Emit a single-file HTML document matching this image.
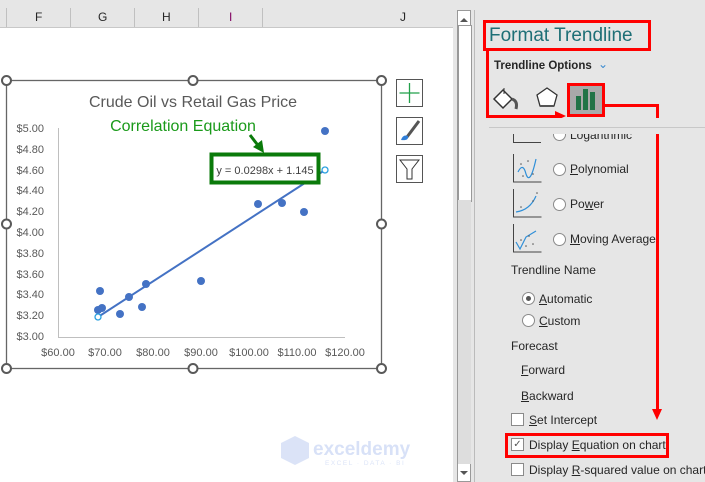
<!DOCTYPE html>
<html><head><style>
body{margin:0;width:705px;height:482px;background:#e6e6e6;position:relative;overflow:hidden;font-family:"Liberation Sans",sans-serif;}
.a{position:absolute;}
.t{position:absolute;font-size:12px;color:#262626;white-space:nowrap;}
u{text-decoration:underline;}
.rad{position:absolute;width:11px;height:11px;border:1px solid #8a8a8a;border-radius:50%;background:#fff;}
.chk{position:absolute;width:11px;height:11px;border:1px solid #8a8a8a;background:#fff;}
.red{position:absolute;border:3px solid #f00;}
.ic{position:absolute;width:27px;height:27px;border-left:1px solid #444;border-bottom:1px solid #444;}
</style></head><body>
<div class="a" style="left:0;top:0;width:453px;height:27px;background:#e6e6e6;border-bottom:1px solid #c8c8c8"></div>
<div class="a" style="left:6px;top:8px;width:1px;height:19px;background:#c0c0c0"></div>
<div class="a" style="left:70px;top:8px;width:1px;height:19px;background:#c0c0c0"></div>
<div class="a" style="left:134px;top:8px;width:1px;height:19px;background:#c0c0c0"></div>
<div class="a" style="left:198px;top:8px;width:1px;height:19px;background:#c0c0c0"></div>
<div class="a" style="left:262px;top:8px;width:1px;height:19px;background:#c0c0c0"></div>
<div class="t" style="left:35px;top:10px">F</div>
<div class="t" style="left:98px;top:10px">G</div>
<div class="t" style="left:162px;top:10px">H</div>
<div class="t" style="left:229px;top:10px;color:#800060">I</div>
<div class="t" style="left:400px;top:10px">J</div>
<div class="a" style="left:0;top:28px;width:453px;height:454px;background:#fff"></div>
<div class="a" style="left:457px;top:10px;width:14px;height:472px;background:#fff;border:1px solid #999;box-sizing:border-box"></div>
<div class="a" style="left:458px;top:25px;width:12px;height:175px;border:1px solid #999;background:#fff"></div>
<div class="a" style="left:458px;top:200px;width:13px;height:264px;background:#ddd"></div>
<div class="a" style="left:460px;top:14px;width:0;height:0;border:4px solid transparent;border-bottom:4px solid #555"></div>
<div class="a" style="left:460px;top:471px;width:0;height:0;border:4px solid transparent;border-top:4px solid #555"></div>
<div class="a" style="left:474px;top:10px;width:1px;height:472px;background:#bbb"></div>
<svg class="a" style="left:0;top:0" width="455" height="482">
<rect x="6.5" y="80.5" width="375" height="288" fill="#fff" stroke="#666" stroke-width="1.3"/>
<g fill="#fff" stroke="#595959" stroke-width="2">
<circle cx="6.5" cy="80.5" r="4.5"/><circle cx="193" cy="80.5" r="4.5"/><circle cx="381.5" cy="80.5" r="4.5"/>
<circle cx="6.5" cy="224" r="4.5"/><circle cx="381.5" cy="224" r="4.5"/>
<circle cx="6.5" cy="368.5" r="4.5"/><circle cx="193" cy="368.5" r="4.5"/><circle cx="381.5" cy="368.5" r="4.5"/>
</g>
<line x1="58.5" y1="128" x2="58.5" y2="337" stroke="#bfbfbf"/>
<line x1="58" y1="337.5" x2="345" y2="337.5" stroke="#bfbfbf"/>
<g font-family="Liberation Sans" font-size="11" fill="#595959" text-anchor="end">
<text x="44" y="132">$5.00</text><text x="44" y="153">$4.80</text><text x="44" y="174">$4.60</text><text x="44" y="194">$4.40</text><text x="44" y="215">$4.20</text><text x="44" y="236">$4.00</text><text x="44" y="257">$3.80</text><text x="44" y="278">$3.60</text><text x="44" y="298">$3.40</text><text x="44" y="319">$3.20</text><text x="44" y="340">$3.00</text>
</g>
<g font-family="Liberation Sans" font-size="11" fill="#595959" text-anchor="middle">
<text x="58" y="356">$60.00</text><text x="105" y="356">$70.00</text><text x="153" y="356">$80.00</text><text x="201" y="356">$90.00</text><text x="249" y="356">$100.00</text><text x="297" y="356">$110.00</text><text x="345" y="356">$120.00</text>
</g>
<text x="193" y="107" text-anchor="middle" font-family="Liberation Sans" font-size="16" fill="#595959">Crude Oil vs Retail Gas Price</text>
<text x="183" y="131" text-anchor="middle" font-family="Liberation Sans" font-size="16" fill="#1a9a1a">Correlation Equation</text>
<line x1="98" y1="317" x2="325" y2="170" stroke="#4472c4" stroke-width="2"/>
<g fill="#4472c4">
<circle cx="325" cy="131" r="4"/><circle cx="258" cy="204" r="4"/><circle cx="282" cy="203" r="4"/><circle cx="304" cy="212" r="4"/>
<circle cx="100" cy="291" r="4"/><circle cx="98" cy="310" r="4"/><circle cx="102" cy="308" r="4"/><circle cx="120" cy="314" r="4"/>
<circle cx="129" cy="297" r="4"/><circle cx="142" cy="307" r="4"/><circle cx="146" cy="284" r="4"/><circle cx="201" cy="281" r="4"/>
</g>
<circle cx="98" cy="317" r="3" fill="#fff" stroke="#2aa0e0" stroke-width="1.3"/>
<circle cx="325" cy="170" r="3" fill="#fff" stroke="#2aa0e0" stroke-width="1.3"/>
<rect x="211.5" y="154.5" width="107" height="28" fill="#fff" stroke="#0a7a0a" stroke-width="4"/>
<text x="265" y="174" text-anchor="middle" font-family="Liberation Sans" font-size="11" fill="#404040">y = 0.0298x + 1.145</text>
<line x1="250" y1="135" x2="260" y2="148" stroke="#0a7a0a" stroke-width="3"/>
<polygon points="264,153 253,147 262,140" fill="#0a7a0a"/>
<rect x="396.5" y="79.5" width="26" height="27" fill="#fff" stroke="#555"/>
<path d="M409.5 83v20M399.5 93h20" stroke="#22a04a" stroke-width="1.3"/>
<rect x="396.5" y="117.5" width="26" height="27" fill="#fff" stroke="#555"/>
<path d="M419 121 L407 137" stroke="#555" stroke-width="3"/>
<path d="M401 140 q2 -6 7 -4 q1 5 -7 4z" fill="#2f7ed8"/>
<rect x="396.5" y="155.5" width="26" height="27" fill="#fff" stroke="#555"/>
<path d="M400 160h19l-7 9v10h-5v-10z" fill="none" stroke="#333"/>
<g opacity="0.3"><polygon points="281,443 295,436 309,443 309,458 295,465 281,458" fill="#8aa6e8"/>
<text x="313" y="455" font-family="Liberation Sans" font-size="19" font-weight="bold" fill="#7f9fe8">exceldemy</text>
<text x="325" y="465" font-family="Liberation Sans" font-size="6.5" fill="#8aa6e8" letter-spacing="1.5">EXCEL · DATA · BI</text></g>
</svg>
<div class="t" style="left:489px;top:25px;font-size:19px;color:#1e6f76">Format Trendline</div>
<div class="red" style="left:483px;top:20px;width:162px;height:25px"></div>
<div class="t" style="left:494px;top:60px;font-weight:bold;font-size:11.5px">Trendline Options</div>
<div class="t" style="left:598px;top:57px;color:#3a8ad0;font-size:12px">&#8964;</div>
<svg class="a" style="left:490px;top:84px" width="40" height="30"><path d="M4 15 L13 6 L22 15 L13 24 Z" fill="#fff" stroke="#333" stroke-width="1.5"/><path d="M14 4 v6" stroke="#333"/><path d="M22 15 q6 2 4 10" stroke="#555" stroke-width="3" fill="none"/></svg>
<svg class="a" style="left:534px;top:86px" width="26" height="26"><path d="M13 2 L23 9 L20 20 L6 20 L3 9Z" fill="#fff" stroke="#333" stroke-width="1.3"/><path d="M6 20h14" stroke="#555" stroke-width="2"/></svg>
<div class="a" style="left:570px;top:86px;width:32px;height:28px;background:#a9a9a9"></div>
<div class="a" style="left:576px;top:96px;width:5px;height:14px;background:#217346"></div>
<div class="a" style="left:583px;top:89px;width:5px;height:21px;background:#217346"></div>
<div class="a" style="left:590px;top:92px;width:5px;height:18px;background:#217346"></div>
<div class="red" style="left:567px;top:83px;width:32px;height:28px;border-width:3px"></div>
<div class="a" style="left:486px;top:49px;width:3px;height:68px;background:#f00"></div>
<div class="a" style="left:486px;top:115px;width:70px;height:3px;background:#f00"></div>
<div class="a" style="left:555px;top:111px;width:0;height:0;border-top:5px solid transparent;border-bottom:5px solid transparent;border-left:11px solid #f00"></div>
<div class="a" style="left:605px;top:104px;width:54px;height:3px;background:#f00"></div>
<div class="a" style="left:656px;top:104px;width:3px;height:306px;background:#f00"></div>
<div class="a" style="left:652px;top:409px;width:0;height:0;border-left:5px solid transparent;border-right:5px solid transparent;border-top:11px solid #f00"></div>
<div class="ic" style="left:513px;top:118px;height:24px"></div>
<div class="rad" style="left:553px;top:128px"></div>
<div class="t" style="left:570px;top:128px">Logarithmic</div>
<div class="a" style="left:489px;top:118px;width:216px;height:9px;background:#e6e6e6"></div>
<div class="a" style="left:489px;top:127px;width:216px;height:1px;background:#c8c8c8"></div>
<div class="a" style="left:489px;top:128px;width:216px;height:6px;background:#e6e6e6"></div>
<svg class="a" style="left:513px;top:154px" width="30" height="30"><path d="M0.5 0v28h28" stroke="#444" fill="none"/><path d="M5 18 q5 -10 8 2 q4 12 10 -15" stroke="#2f8fd8" fill="none" stroke-width="1.2"/><g fill="#555"><circle cx="8" cy="10" r=".8"/><circle cx="15" cy="7" r=".8"/><circle cx="20" cy="20" r=".8"/><circle cx="10" cy="22" r=".8"/></g></svg>
<div class="rad" style="left:553px;top:163px"></div>
<div class="t" style="left:570px;top:162px"><u>P</u>olynomial</div>
<svg class="a" style="left:513px;top:189px" width="30" height="30"><path d="M0.5 0v28h28" stroke="#444" fill="none"/><path d="M3 23 q14 -2 20 -16" stroke="#2f8fd8" fill="none" stroke-width="1.2"/><g fill="#555"><circle cx="8" cy="18" r=".8"/><circle cx="20" cy="12" r=".8"/><circle cx="24" cy="4" r=".8"/></g></svg>
<div class="rad" style="left:553px;top:198px"></div>
<div class="t" style="left:570px;top:197px">Po<u>w</u>er</div>
<svg class="a" style="left:513px;top:224px" width="30" height="30"><path d="M0.5 0v28h28" stroke="#444" fill="none"/><path d="M3 18 l4 7 l6 -12 l10 -6" stroke="#2f8fd8" fill="none" stroke-width="1.2"/><g fill="#555"><circle cx="8" cy="16" r=".8"/><circle cx="16" cy="12" r=".8"/><circle cx="20" cy="20" r=".8"/><circle cx="13" cy="22" r=".8"/></g></svg>
<div class="rad" style="left:553px;top:233px"></div>
<div class="t" style="left:570px;top:232px"><u>M</u>oving Average</div>
<div class="t" style="left:511px;top:263px">Trendline Name</div>
<div class="rad" style="left:522px;top:292px"></div>
<div class="a" style="left:526px;top:296px;width:5px;height:5px;border-radius:50%;background:#555"></div>
<div class="t" style="left:539px;top:292px"><u>A</u>utomatic</div>
<div class="rad" style="left:522px;top:314px"></div>
<div class="t" style="left:539px;top:314px"><u>C</u>ustom</div>
<div class="t" style="left:511px;top:339px">Forecast</div>
<div class="t" style="left:521px;top:363px"><u>F</u>orward</div>
<div class="t" style="left:521px;top:389px"><u>B</u>ackward</div>
<div class="chk" style="left:511px;top:413px"></div>
<div class="t" style="left:529px;top:413px"><u>S</u>et Intercept</div>
<div class="chk" style="left:511px;top:438px;font-size:10px;line-height:11px;text-align:center;color:#555">&#10003;</div>
<div class="t" style="left:529px;top:438px">Display <u>E</u>quation on chart</div>
<div class="red" style="left:505px;top:433px;width:158px;height:19px"></div>
<div class="chk" style="left:511px;top:463px"></div>
<div class="t" style="left:529px;top:463px">Display <u>R</u>-squared value on chart</div>
</body></html>
